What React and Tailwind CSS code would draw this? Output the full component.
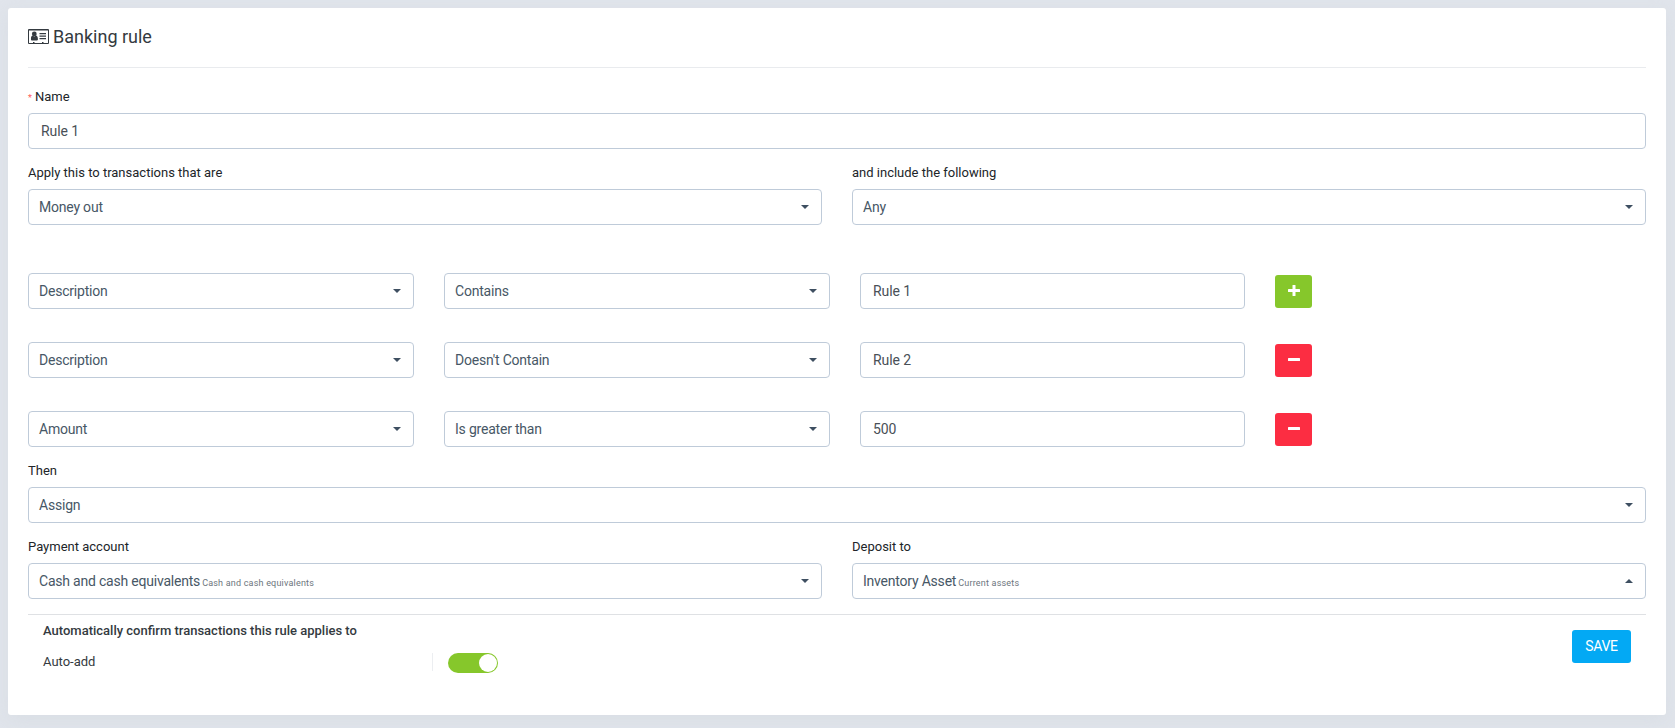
import React from 'react';

function Caret({ up }) {
  return (
    <svg className="h-1 w-2 shrink-0" viewBox="0 0 8 4" fill="#3e4f61">
      <path d={up ? 'M0 4L4 0L8 4Z' : 'M0 0L4 4L8 0Z'} />
    </svg>
  );
}

function Label({ children }) {
  return <div className="h-5 text-[13px] leading-5 text-[#212529]">{children}</div>;
}

function Select({ value, note, up }) {
  return (
    <div className="flex h-9 items-center justify-between rounded border border-[#bfcbd9] bg-white pr-3 pl-[10px] text-[14px] tracking-[-0.21px] text-[#475766]">
      <div className="whitespace-nowrap">
        {value}
        {note && <span className="ml-[2px] text-[9px] tracking-[0.2px] text-[#6c757d]">{note}</span>}
      </div>
      <Caret up={up} />
    </div>
  );
}

function Input({ value }) {
  return (
    <div className="flex h-9 items-center rounded border border-[#bfcbd9] bg-white px-3 text-[14px] tracking-[-0.1px] text-[#495057]">
      {value}
    </div>
  );
}

function Field({ label, children }) {
  return (
    <div className="flex flex-1 flex-col gap-[6px]">
      <Label>{label}</Label>
      {children}
    </div>
  );
}

const conditions = [
  ['Description', 'Contains', 'Rule 1'],
  ['Description', "Doesn't Contain", 'Rule 2'],
  ['Amount', 'Is greater than', '500'],
];

export default function App() {
  return (
    <div className="h-[728px] w-[1675px] overflow-hidden bg-[#e1e5ec] pt-2 pl-2 font-['Roboto',sans-serif]">
      <div className="h-[707px] w-[1658px] rounded-[3px] bg-white px-5 shadow-[0_5px_20px_rgba(190,200,205,0.25)]">
        <div className="flex h-[60px] items-center gap-1 border-b border-[#e9ebee] pb-[3px]">
          <svg className="h-[15px] w-[21px]" viewBox="0 0 21 15" fill="#343a40">
            <path fillRule="evenodd" d="M1 0H20Q21 0 21 1V14Q21 15 20 15H1Q0 15 0 14V1Q0 0 1 0ZM1 1.5V14H5V13H6.5V14H14V13H15.5V14H20V1.5Z" />
            <circle cx="6.3" cy="4.9" r="2.4" />
            <path d="M3 10.8Q2.7 7 4.6 6.6Q6.3 8.2 8 6.6Q10 7 9.9 10.8Q9.7 11.6 8.8 11.6H3.8Q3.1 11.6 3 10.8Z" />
            <path d="M11.5 4H18V5.2H11.5ZM11.5 6.5H18V7.7H11.5ZM11.5 9H18V10.2H11.5Z" />
          </svg>
          <h1 className="pt-[1px] text-[18px] leading-6 text-[#343a40]">Banking rule</h1>
        </div>

        <div className="flex flex-col gap-[14px] pt-[19px]">
          <Field label={<><span className="mr-[3px] text-[9px] text-[#ff5c5c]">*</span>Name</>}>
            <Input value="Rule 1" />
          </Field>
          <div className="flex gap-[30px]">
            <Field label="Apply this to transactions that are"><Select value="Money out" /></Field>
            <Field label="and include the following"><Select value="Any" /></Field>
          </div>
        </div>

        <div className="flex flex-col gap-[33px] pt-12">
          {conditions.map(([field, op, value], i) => (
            <div key={i} className="grid grid-cols-[386px_386px_385px_37px] items-center gap-[30px]">
              <Select value={field} />
              <Select value={op} />
              <Input value={value} />
              <div className={i === 0
                ? 'flex h-[33px] items-center justify-center rounded-[3px] bg-[#86c72b] pb-[2px] text-white'
                : 'flex h-[33px] items-center justify-center rounded-[3px] bg-[#fc2d42] pb-[2px] text-white'}>
                <svg className="h-[11px] w-3" viewBox="0 0 12 11" fill="currentColor">
                  <rect y="4" width="12" height="3" rx="0.5" />
                  {i === 0 && <rect x="4.5" width="3" height="11" rx="0.5" />}
                </svg>
              </div>
            </div>
          ))}
        </div>

        <div className="flex flex-col gap-[14px] pt-[14px]">
          <Field label="Then"><Select value="Assign" /></Field>
          <div className="flex gap-[30px]">
            <Field label="Payment account">
              <Select value="Cash and cash equivalents" note="Cash and cash equivalents" />
            </Field>
            <Field label="Deposit to"><Select value="Inventory Asset" note="Current assets" up /></Field>
          </div>
        </div>

        <div className="mt-[15px] flex justify-between border-t border-[#dfe1e4] px-[15px] text-[13px] leading-5 text-[#343a40]">
          <div className="pt-[6px]">
            <div className="font-medium">Automatically confirm transactions this rule applies to</div>
            <div className="mt-[11px] flex h-5 w-[455px]">
              <div className="w-[389px]">Auto-add</div>
              <div className="mt-[1px] h-[18px] w-4 border-l border-[#eceef1]" />
              <div className="mt-[1px] flex h-5 w-[50px] shrink-0 items-center justify-end rounded-full bg-[#86c72b] pr-[1px]">
                <div className="size-[18px] rounded-full bg-white" />
              </div>
            </div>
          </div>
          <button className="mt-[15px] h-[33px] w-[59px] rounded-[3px] bg-[#03a9f4] pb-[1px] text-[14px] tracking-[-0.3px] text-white">SAVE</button>
        </div>
      </div>
    </div>
  );
}
